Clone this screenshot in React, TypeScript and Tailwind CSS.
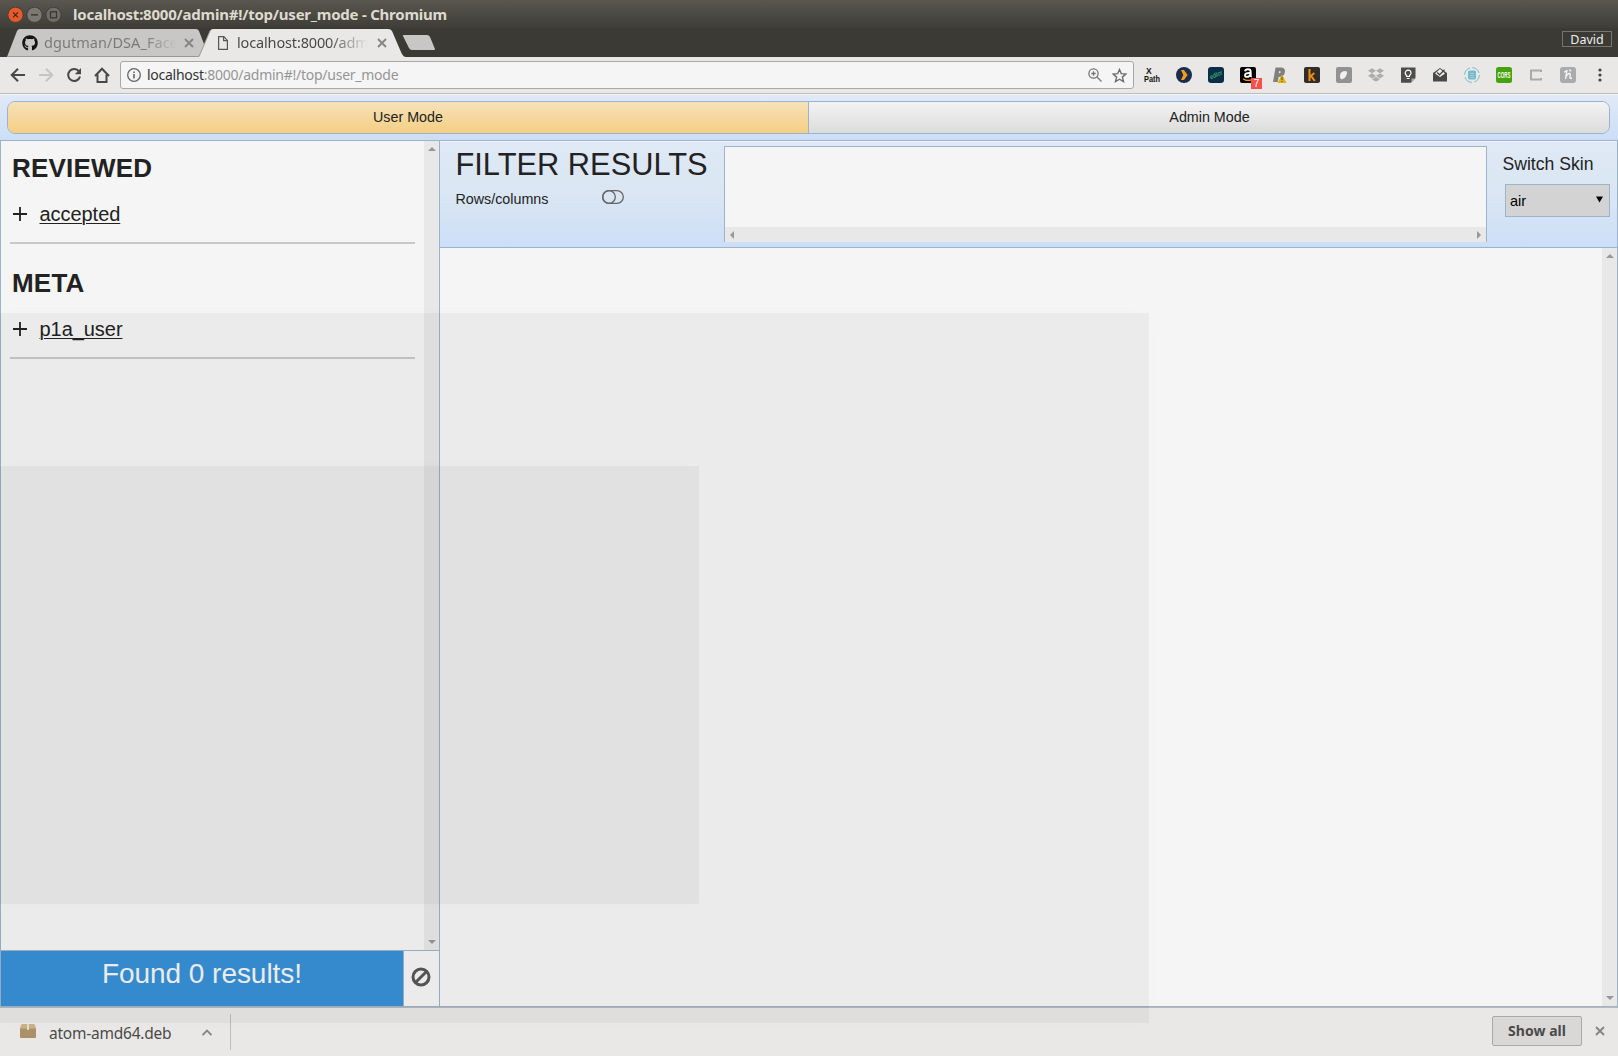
import React from 'react';
import { FaGithub, FaDropbox } from 'react-icons/fa';

const ui = "font-['Noto_Sans',sans-serif]";

function Cross({ className = '' }: { className?: string }) {
  return (
    <svg className={className} width="10" height="10" viewBox="0 0 10 10" fill="none" stroke="#858585" strokeWidth="1.9">
      <path d="M1 1l8 8M9 1l-8 8" />
    </svg>
  );
}

function Triangle({ dir }: { dir: 'up' | 'down' | 'left' | 'right' }) {
  const d = { up: 'M0 6L4 2L8 6z', down: 'M0 2L4 6L8 2z', left: 'M5 0L1 4L5 8z', right: 'M3 0L7 4L3 8z' }[dir];
  return (
    <svg width="8" height="8" viewBox="0 0 8 8" fill="#989898">
      <path d={d} />
    </svg>
  );
}

function WindowBar() {
  return (
    <div className="flex h-7 shrink-0 items-center bg-linear-to-b from-[#59574f] to-[#3e3d38] pl-2">
      <svg width="54" height="16" viewBox="0 0 54 16" fill="none" className="mt-px">
        <circle cx="7.5" cy="7.8" r="7.6" fill="#e95a2b" stroke="#35342f" strokeWidth=".7" />
        <circle cx="26.5" cy="7.8" r="7.6" fill="#7b7972" stroke="#35342f" strokeWidth=".7" />
        <circle cx="45.5" cy="7.8" r="7.6" fill="#6f6d66" stroke="#35342f" strokeWidth=".7" />
        <path d="M5 5.3l5 5M10 5.3l-5 5M23 7.8h7" stroke="#3b2a22" strokeWidth="1.2" />
        <rect x="42.5" y="4.8" width="6" height="6" stroke="#35342f" strokeWidth="1.2" />
      </svg>
      <h1 className={`${ui} -mt-px ml-[11px] text-[15px] leading-7 font-bold tracking-[-0.23px] whitespace-nowrap text-[#dedad0]`}>
        localhost:8000/admin#!/top/user_mode - Chromium
      </h1>
    </div>
  );
}

function TabStrip() {
  return (
    <div className="relative flex h-[29px] shrink-0 bg-[#3b3a35]">
      <svg className="absolute top-0 left-0" width="440" height="29" viewBox="0 0 440 29">
        <path d="M7 29L17 3q1-2 3-2H196q2 0 3 2l10 26z" fill="#c8c7c5" />
        <path d="M199 28.5L210 3q1-2 3-2H388q3 0 4 2l9 21q2 5 5 5H199z" fill="#e9e8e6" />
        <path d="M7 28.5H199L210 3" fill="none" stroke="#999895" />
        <path d="M403 8q-1-1 1-1H427q2 0 3 2l5 12q0 1-1 1H412q-2 0-3-2z" fill="#c8c7c5" />
      </svg>
      <div className="relative flex w-[210px] items-center pl-[22px]">
        <FaGithub size={16} color="#141414" />
        <span className={`${ui} ml-1.5 w-[133px] overflow-hidden bg-linear-to-r from-[#777] from-75% to-transparent bg-clip-text text-[14.5px] tracking-[0.05px] whitespace-nowrap text-transparent`}>
          dgutman/DSA_Face
        </span>
        <Cross className="ml-[7px]" />
      </div>
      <div className="relative flex items-center pl-2">
        <svg width="10" height="14" viewBox="0 0 10 14" fill="none" stroke="#555" strokeWidth="1.2">
          <path d="M.6.6h5.2l3.6 3.8v9H.6zM5.6.8v3.8h3.6" />
        </svg>
        <span className={`${ui} ml-[9px] w-[131px] bg-linear-to-r from-[#444] from-70% to-transparent bg-clip-text text-[14.5px] tracking-[-0.15px] whitespace-nowrap text-transparent`}>
          localhost:8000/adm
        </span>
        <Cross className="ml-[9px]" />
      </div>
      <div className={`${ui} mt-[3px] mr-[6px] ml-auto flex h-4 w-[50px] items-center justify-center border border-[#77756e] pt-[2px] text-[12.5px] text-[#eee]`}>
        David
      </div>
    </div>
  );
}

function Extensions() {
  return (
    <div className="ml-[10px] flex flex-1 items-center gap-4">
      <svg className="overflow-visible" width="16" height="16" viewBox="0 0 16 16" fontFamily="Liberation Sans" fontWeight="bold" fill="#111">
        <text x="2" y="6.5" fontSize="8.5">X</text>
        <text x="0" y="14.5" fontSize="8.5" textLength="16" lengthAdjust="spacingAndGlyphs">Path</text>
      </svg>
      <svg width="16" height="16" viewBox="0 0 16 16">
        <circle cx="8" cy="8" r="8" fill="#1c2d4c" />
        <path d="M5 3h3l3.6 5L8 13H5l2.3-5z" fill="#f99b1c" />
      </svg>
      <svg className="overflow-visible" width="16" height="16" viewBox="0 0 16 16">
        <rect width="16" height="16" rx="3" fill="#0b2f48" />
        <text x="1.6" y="10" fontSize="6.5" fontStyle="italic" textLength="13" lengthAdjust="spacingAndGlyphs" fill="#4ecb7d" transform="rotate(-25 8 8)" fontFamily="Liberation Sans">editor</text>
      </svg>
      <div className="relative flex h-4 w-4 items-center justify-center rounded-xs bg-black text-white">
        <svg className="absolute inset-0" width="16" height="16" viewBox="0 0 16 16" fill="none">
          <path d="M5 4.3q.6-2 3-2 2.7 0 2.7 2.5v3.4q0 1 1 1.6M10.5 6q-5.5-.3-5.5 2.200 0 1.700 1.900 1.700 2.800 0 3.600-3" stroke="#fff" strokeWidth="1.900" />
          <path d="M3 11.700q5 3.500 10 0" stroke="#f90" strokeWidth="1.200" />
        </svg>
        <span className="absolute top-[11px] left-[11px] flex h-[11px] w-[11px] items-center justify-center bg-[#f5504c] text-[10px] leading-none text-white">7</span>
      </div>
      <svg width="16" height="16" viewBox="0 0 16 16">
        <path fillRule="evenodd" d="M3.500.500H10q4 1 2.700 5.500-1 4-6 4l-1 5H1zM7.300 4L6.700 6.200h1q1-.3.900-1.400 0-.8-.7-.8z" fill="#808080" />
        <path d="M10 7.500l4.500 8.500h-9z" fill="#e0b112" />
        <path d="M10 10v3M10 14v1" stroke="#5c4a0a" />
      </svg>
      <svg width="16" height="16" viewBox="0 0 16 16">
        <rect width="16" height="16" rx="2" fill="#302c2a" />
        <path d="M5.500 2v12M5.800 10l4.500-4M7 8.800l3.800 5.200" fill="none" stroke="#f28c13" strokeWidth="2" />
      </svg>
      <svg width="16" height="16" viewBox="0 0 16 16">
        <rect width="16" height="16" rx="2" fill="#929292" />
        <path d="M4 9q0-5 6-5 2 1 0 5-2 4-5 3-1 0-1-3z" fill="#f1f1f1" />
      </svg>
      <FaDropbox size={16} color="#adadad" />
      <svg width="16" height="16" viewBox="0 0 16 16" fill="none">
        <path d="M1 0.500h14.500V11l-4.700 4.700H1z" fill="#4d4d4d" />
        <path d="M11.500 15.500v-4h4z" fill="#a7a7a7" />
        <path d="M6.700 9.500V8.500q-1.500-.9-1.500-2.400a2.900 2.900 0 0 1 5.800 0q0 1.500-1.500 2.400v1zM6.700 11.500h2.800" stroke="#fff" strokeWidth="1.200" />
      </svg>
      <svg width="16" height="16" viewBox="0 0 16 16" fill="none">
        <path d="M1 6l7-5 7 5v8.500H1z" fill="#484848" />
        <path d="M3 6.500L8 2l5 4.500-5 3.500z" fill="#eee" />
        <path d="M5.200 5.500l2.300 2.300 5-5" stroke="#484848" strokeWidth="1.300" />
      </svg>
      <svg width="16" height="16" viewBox="0 0 16 16" fill="none" stroke="#78b9cc">
        <circle cx="8" cy="8" r="7.300" strokeDasharray="9 2.500" />
        <rect x="4.500" y="4" width="7" height="8" rx="1" fill="#78b9cc" />
        <path d="M6 6.500h4M6 8.500h4M6 10.500h4" stroke="#acd6e0" strokeWidth=".7" />
      </svg>
      <svg className="overflow-visible" width="16" height="16" viewBox="0 0 16 16">
        <rect width="16" height="16" rx="2.500" fill="#47a30b" />
        <text x="1.600" y="11" fontSize="8.500" fontWeight="bold" textLength="12.800" lengthAdjust="spacingAndGlyphs" fill="#fff" fontFamily="Liberation Sans">CORS</text>
      </svg>
      <svg width="16" height="16" viewBox="0 0 16 16" fill="none" stroke="#a9a9a9" strokeWidth="2">
        <path d="M13 5V3.500H3v9h10V11" />
      </svg>
      <svg width="16" height="16" viewBox="0 0 16 16" fill="none">
        <rect width="16" height="16" rx="3" fill="#aaabad" />
        <path d="M4 5q2 0 3-2L5.500 12M5.800 10q2-4 4-3.500 1 .5.200 3-.5 2.500 2 1.500M9 3q2 0 1.500 1.500" stroke="#f4f4f4" strokeWidth="1.400" />
      </svg>
      <svg className="mr-4 ml-auto" width="4" height="14" viewBox="0 0 4 14" fill="#444">
        <circle cx="2" cy="2" r="1.600" />
        <circle cx="2" cy="7" r="1.600" />
        <circle cx="2" cy="12" r="1.600" />
      </svg>
    </div>
  );
}

function Toolbar() {
  return (
    <div className="flex h-[37px] shrink-0 items-center border-b border-[#bdbcba] bg-[#e9e8e6] pl-[10px]">
      <div className="flex gap-3">
        <svg width="16" height="16" viewBox="0 0 16 16" fill="none" stroke="#484848" strokeWidth="2">
          <path d="M15 8H2.500M8 1.700L1.700 8 8 14.300" />
        </svg>
        <svg width="16" height="16" viewBox="0 0 16 16" fill="none" stroke="#c6c5c4" strokeWidth="2">
          <path d="M1 8h12.500M8 1.700L14.300 8 8 14.300" />
        </svg>
        <svg width="16" height="16" viewBox="0 0 16 16" fill="none" stroke="#484848" strokeWidth="2">
          <path d="M13.300 4.800A6 6 0 1 0 14 9.500" />
          <path d="M15 1v6.200H8.800z" fill="#484848" stroke="none" />
        </svg>
        <svg width="16" height="16" viewBox="0 0 16 16" fill="none" stroke="#484848" strokeWidth="2">
          <path d="M1 9L8 1.800 15 9M3.500 7.500V15h9V7.500" />
        </svg>
      </div>
      <div className="ml-[10px] flex h-7 w-[1014px] items-center rounded-[3px] border border-[#a8a7a6] bg-[#f5f5f5] pr-[6px] pl-[6px]">
        <svg width="14" height="14" viewBox="0 0 14 14" fill="none" stroke="#666" strokeWidth="1.300">
          <circle cx="7" cy="7" r="6.300" />
          <path d="M7 6v4.500M7 3.400v1.500" strokeWidth="1.600" />
        </svg>
        <span className={`${ui} -mt-px ml-[6px] text-[14px] tracking-[-0.26px] whitespace-nowrap text-[#959595]`}>
          <span className="text-[#333]">localhost</span>:8000/admin#!/top/user_mode
        </span>
        <svg className="ml-auto" width="14" height="14" viewBox="0 0 14 14" fill="none" stroke="#757575" strokeWidth="1.300">
          <circle cx="5.500" cy="5.500" r="4.600" />
          <path d="M9 9l4.500 4.500M3.300 5.500h4.400M5.500 3.300v4.400" />
        </svg>
        <svg className="ml-[10px]" width="15" height="15" viewBox="0 0 15 15" fill="none" stroke="#6d6d6d" strokeWidth="1.400">
          <path d="M7.500 1.500l1.800 4.200 4.600.4-3.500 3 1.100 4.500-4-2.400-4 2.400 1.100-4.500-3.500-3 4.600-.4z" />
        </svg>
      </div>
      <Extensions />
    </div>
  );
}

function FacetGroup({ title, item }: { title: string; item: string }) {
  return (
    <section className="h-[115px] pt-3 pl-[9px]">
      <h2 className="pl-[2px] text-[26px] leading-[30px] font-bold tracking-[0.200px]">{title}</h2>
      <div className="mt-[15px] flex h-8 items-center pl-[3px] text-[20px]">
        <svg width="14" height="14" viewBox="0 0 14 14" fill="none" stroke="#222" strokeWidth="1.800" className="-ml-[0.500px]">
          <path d="M0 7h14M7 0v14" />
        </svg>
        <span className="ml-[13px] tracking-[-0.050px] underline decoration-1 underline-offset-2">{item}</span>
      </div>
      <div className="mt-3 h-[2px] w-[405px] bg-[#c8c8c8]" />
    </section>
  );
}

function Sidebar() {
  return (
    <aside className="flex w-[440px] shrink-0 flex-col border-x border-[#9bb4cb]">
      <div className="flex flex-1">
        <div className="flex-1">
          <FacetGroup title="REVIEWED" item="accepted" />
          <FacetGroup title="META" item="p1a_user" />
        </div>
        <div className="flex w-[15px] flex-col items-center justify-between bg-[#e8e8e8] py-1">
          <Triangle dir="up" />
          <Triangle dir="down" />
        </div>
      </div>
      <div className="flex h-14 border-t border-[#9bb4cb]">
        <div className="w-[402px] bg-[#3790d5] pt-[6px] text-center text-[28px] leading-[34px] tracking-[-0.050px] text-[#f5f5f5]">
          Found 0 results!
        </div>
        <div className="flex flex-1 items-center justify-center border-l border-[#9bb4cb] pr-[2px] pb-[3px]">
          <svg width="20" height="20" viewBox="0 0 20 20" fill="none" stroke="#575757" strokeWidth="3">
            <circle cx="10" cy="10" r="8" />
            <path d="M4.500 15.500l11-11" />
          </svg>
        </div>
      </div>
    </aside>
  );
}

function FilterHeader() {
  return (
    <header className="flex h-[107px] shrink-0 border-b border-[#9bb4cb] bg-linear-to-b from-[#e0e9f6] via-[#dae6f3] to-[#ccdef7] pt-[5px] pl-[15px] shadow-[inset_0_1px_0_#eff3f9]">
      <div className="w-[269px] pl-[0.500px]">
        <h2 className="pt-px text-[30.800px] leading-9 whitespace-nowrap">FILTER RESULTS</h2>
        <div className="mt-[6px] flex items-center text-[14.300px] leading-5">
          <span className="w-[146px]">Rows/columns</span>
          <svg width="22" height="14" viewBox="0 0 22 14" fill="none" stroke="#666" strokeWidth="1.300" className="-mt-1">
            <rect x=".7" y=".7" width="20.600" height="12.600" rx="6.300" />
            <circle cx="7" cy="7" r="6.300" />
          </svg>
        </div>
      </div>
      <div className="flex h-24 w-[763px] flex-col border border-b-0 border-[#9bb4cb] bg-[#f5f5f5]">
        <div className="flex-1" />
        <div className="flex h-[15px] items-center justify-between bg-[#e8e8e8] px-1">
          <Triangle dir="left" />
          <Triangle dir="right" />
        </div>
      </div>
      <div className="ml-[15.500px] pt-2">
        <div className="text-[17.600px] leading-5">Switch Skin</div>
        <div className="mt-[10px] ml-[2.500px] flex h-[33px] w-[105px] items-center justify-between border border-[#9bb4cb] bg-[#d3d3d3] pr-[6px] pl-1 text-[14.500px] text-black">
          <span className="pt-[2px]">air</span>
          <svg width="7" height="7" viewBox="0 0 7 7" className="-mt-[2px]">
            <path d="M0 .5h7L3.500 6.500z" />
          </svg>
        </div>
      </div>
    </header>
  );
}

function Downloads() {
  return (
    <footer className={`${ui} flex h-[49px] shrink-0 items-center border-t border-[#b7b9bb] bg-[#e9e8e6] text-[#4a4a4a]`}>
      <svg className="mb-[2px] ml-[19px]" width="18" height="16" viewBox="0 0 18 16">
        <path d="M1 5h16v9q0 1-1 1H2q-1 0-1-1z" fill="#ab9168" />
        <path d="M3 1h12q1 0 2 4.500H1Q2 1 3 1z" fill="#c9b189" />
        <path d="M8 1h2v6H8z" fill="#e6dac0" />
      </svg>
      <span className="mt-[3px] ml-3 w-[122px] text-[15.500px] tracking-[-0.230px] whitespace-nowrap">atom-amd64.deb</span>
      <svg className="ml-[31px]" width="10" height="7" viewBox="0 0 10 7" fill="none" stroke="#858585" strokeWidth="1.800">
        <path d="M.6 6L5 1.500 9.400 6" />
      </svg>
      <div className="ml-[18px] h-9 w-px bg-[#bebdbb]" />
      <div className="-mt-[2px] ml-auto flex h-[30px] w-[90px] items-center justify-center rounded-xs border border-[#aaa9a7] bg-[#d9d8d6] pb-px text-[14px] font-bold tracking-[0.050px]">
        Show all
      </div>
      <Cross className="-mt-[2px] mr-[13px] ml-[13px]" />
    </footer>
  );
}

export default function App() {
  return (
    <div className="relative flex h-[1056px] w-[1618px] flex-col overflow-hidden bg-[#f5f5f5] text-[#222] font-['Liberation_Sans',Arial,sans-serif]">
      <WindowBar />
      <TabStrip />
      <Toolbar />
      <nav className="h-[47px] shrink-0 border-t border-b border-t-[#f5f5f5] border-b-[#9bb4cb] bg-linear-to-b from-[#e0e9f6] to-[#ccdef7] pt-[6px] pr-2 pl-[7px]">
        <div className="flex h-[33px] overflow-hidden rounded-lg border border-[#9bb4cb] text-[14.300px]">
          <div className="flex w-[801px] items-center justify-center border-r border-[#9bb4cb] bg-linear-to-b from-[#f6e1b9] to-[#f5cf82] pt-px">User Mode</div>
          <div className="flex flex-1 items-center justify-center bg-linear-to-b from-[#f3f3f3] to-[#dcdcdc] pt-px pl-px">Admin Mode</div>
        </div>
      </nav>
      <div className="flex min-h-0 flex-1 border-b border-[#9bb4cb]">
        <Sidebar />
        <main className="flex flex-1 flex-col border-r border-[#9bb4cb]">
          <FilterHeader />
          <div className="flex flex-1 justify-end">
            <div className="flex w-[15px] flex-col items-center justify-between bg-[#e8e8e8] py-1">
              <Triangle dir="up" />
              <Triangle dir="down" />
            </div>
          </div>
        </main>
      </div>
      <Downloads />
      <div className="pointer-events-none absolute top-[313px] left-0 h-[710px] w-[1149px] bg-black/4 shadow-[0_0_20px_rgba(0,0,0,0.012)]" />
      <div className="pointer-events-none absolute top-[466px] left-0 h-[438px] w-[699px] bg-black/4 shadow-[0_0_20px_rgba(0,0,0,0.012)]" />
    </div>
  );
}
